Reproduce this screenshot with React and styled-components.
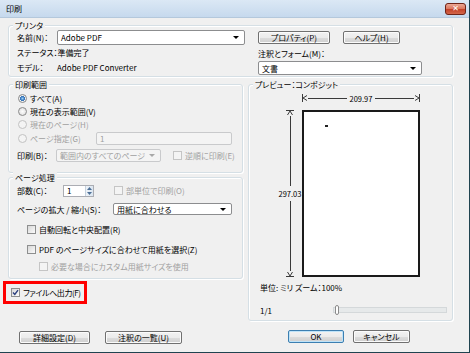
import styled, { createGlobalStyle } from "styled-components"

const GlobalStyle = createGlobalStyle`
  * { box-sizing: border-box; }
  html, body { margin: 0; padding: 0; background: #f0f0f0; }
  body {
    font-family: "Noto Sans CJK JP", "Liberation Sans", sans-serif;
    font-size: 8px;
    line-height: 11px;
    color: #000;
    font-feature-settings: "palt";
  }
`

const Window = styled.div`
  width: 470px;
  height: 353px;
  display: flex;
  flex-direction: column;
  background: #f0f0f0;
  border-right: 1px solid #1f4350;
  border-bottom: 1px solid #1f4350;
  overflow: hidden;
`

const TitleBar = styled.div`
  height: 18px;
  flex: none;
  display: flex;
  align-items: center;
  padding: 0 3px 0 6px;
  background: linear-gradient(to bottom, #dbe8f5, #c6d9ed);
  border-bottom: 1px solid #b4c8dc;
`

const TitleText = styled.span`
  flex: 1;
`

const CloseButton = styled.span`
  display: inline-flex;
  width: 21px;
  height: 12px;
  flex: none;
  align-items: center;
  justify-content: center;
  border: 1px solid #6e2418;
  border-radius: 3px;
  background: #d0553b linear-gradient(to bottom, #eba895 0%, #dc7a62 45%, #c4432a 55%, #d3664a 100%);
  color: #fff;
  font-family: "DejaVu Sans", sans-serif;
  font-size: 8px;
  font-weight: bold;
  line-height: 10px;
`

const Body = styled.div`
  flex: 1;
  padding: 7px 16px 0 8px;
  display: flex;
  flex-direction: column;
`

const Group = styled.div`
  position: relative;
  border: 1px solid #d5dfe5;
  border-radius: 3px;
  box-shadow: inset 1px 1px 0 #fff, 1px 1px 0 #fff;
`

const Legend = styled.span`
  position: absolute;
  top: -6px;
  left: 4px;
  padding: 0 2px;
  background: #f0f0f0;
  white-space: nowrap;
`

const PrinterGroup = styled(Group)`
  height: 52px;
  display: flex;
`

const PrinterInfo = styled.div`
  width: 249px;
  padding: 4px 0 0 8px;
`

const InfoRow = styled.div`
  height: 15px;
  display: flex;
  align-items: center;
  white-space: nowrap;
`

const FieldLabel = styled.span`
  width: ${(p) => p.$w || 40}px;
  flex: none;
  white-space: nowrap;
`

const PrinterActions = styled.div`
  flex: 1;
  padding-top: 5px;
  display: flex;
  flex-direction: column;
`

const ButtonRow = styled.div`
  display: flex;
  gap: ${(p) => p.$gap || 13}px;
`

const Button = styled.div`
  width: ${(p) => p.$w}px;
  height: 13px;
  flex: none;
  display: flex;
  align-items: center;
  justify-content: center;
  border: 1px solid ${(p) => (p.$default ? "#3c7fb1" : "#707070")};
  border-radius: 2px;
  background: linear-gradient(to bottom, #f2f2f2 0%, #ebebeb 50%, #dddddd 51%, #cfcfcf 100%);
  box-shadow: inset 0 0 0 1px ${(p) => (p.$default ? "#bfe3f8" : "#fbfbfb")};
  white-space: nowrap;
`

const ActionLabel = styled.div`
  margin-top: 4px;
`

const Select = styled.div`
  width: ${(p) => p.$w}px;
  height: ${(p) => p.$h || 13}px;
  flex: none;
  display: flex;
  align-items: center;
  margin-top: ${(p) => p.$mt || 0}px;
  margin-left: ${(p) => (p.$push ? "auto" : "0")};
  padding-left: 3px;
  border: 1px solid ${(p) => (p.$disabled ? "#c9cacc" : "#8c8d8f")};
  border-radius: 2px;
  background: ${(p) => (p.$disabled ? "#f4f4f4" : "#fff")};
  color: ${(p) => (p.$disabled ? "#a0a0a0" : "#000")};
  white-space: nowrap;
`

const Caret = styled.span`
  margin-left: auto;
  margin-right: 5px;
  width: 0;
  height: 0;
  border-left: 3px solid transparent;
  border-right: 3px solid transparent;
  border-top: 3px solid ${(p) => (p.$disabled ? "#a8a8a8" : "#000")};
`

const MainRow = styled.div`
  display: flex;
  gap: 5px;
  margin-top: 7px;
`

const LeftCol = styled.div`
  width: 235px;
  flex: none;
  display: flex;
  flex-direction: column;
`

const RangeGroup = styled(Group)`
  padding: 7px 10px 9px 8px;
`

const OptionRow = styled.div`
  height: ${(p) => p.$h || 13}px;
  margin-top: ${(p) => p.$mt || 0}px;
  padding-left: ${(p) => p.$indent || 0}px;
  display: flex;
  align-items: center;
  white-space: nowrap;
  color: ${(p) => (p.$disabled ? "#a0a0a0" : "#000")};
`

const Muted = styled.span`
  color: #a0a0a0;
`

const Radio = styled.span`
  width: 9px;
  height: 9px;
  flex: none;
  margin: 0 3px 0 1px;
  border-radius: 50%;
  border: 1px solid ${(p) => (p.$disabled ? "#c2c2c2" : "#8a8a8a")};
  background: ${(p) =>
    p.$checked
      ? "radial-gradient(circle, #9dd0f5 0, #2f6fb6 2.2px, #f6f6f6 2.8px, #d9d9d9 100%)"
      : p.$disabled
      ? "#f4f4f4"
      : "radial-gradient(circle, #fdfdfd, #d9d9d9)"};
`

const Check = styled.span`
  width: 9px;
  height: 9px;
  flex: none;
  margin-left: ${(p) => p.$ml || 0}px;
  margin-right: 3px;
  display: flex;
  align-items: center;
  justify-content: center;
  border: 1px solid ${(p) => (p.$disabled ? "#c5c5c5" : "#8e8f8f")};
  background: ${(p) => (p.$disabled ? "#f4f4f4" : "linear-gradient(135deg, #d8d8d8, #fbfbfb)")};
`

const TextInput = styled.div`
  width: ${(p) => p.$w}px;
  height: 13px;
  margin-left: auto;
  padding-left: 3px;
  display: flex;
  align-items: center;
  border: 1px solid #c9cacc;
  border-radius: 2px;
  background: #f4f4f4;
  color: #a0a0a0;
`

const PageGroup = styled(Group)`
  margin-top: 4px;
  padding: 6px 10px 6px 8px;
`

const Spinner = styled.div`
  width: 31px;
  height: 12px;
  flex: none;
  display: flex;
  border: 1px solid #abadb3;
  background: #fff;
`

const SpinValue = styled.span`
  flex: 1;
  padding-left: 3px;
  line-height: 10px;
`

const SpinButtons = styled.div`
  width: 8px;
  display: flex;
  flex-direction: column;
  border-left: 1px solid #c6d2de;
  background: linear-gradient(to right, #eef3f8, #dbe6f1);
`

const SpinHalf = styled.div`
  flex: 1;
  display: flex;
  align-items: center;
  justify-content: center;
`

const FileOutput = styled.div`
  width: 84px;
  height: 23px;
  margin: 2px 0 0 -5px;
  padding-left: 5px;
  display: flex;
  align-items: center;
  border: 3px solid #ff0000;
  white-space: nowrap;
  letter-spacing: -0.4px;
`

const RightCol = styled.div`
  flex: 1;
  display: flex;
  flex-direction: column;
`

const PreviewGroup = styled(Group)`
  height: 237px;
  padding-top: 7px;
`

const Diagram = styled.div`
  display: grid;
  grid-template-columns: 24px 118px;
  grid-template-rows: 12px 167px;
  row-gap: 6px;
  margin-left: 29px;
`

const WidthRuler = styled.div`
  display: flex;
  align-items: center;
`

const HeightRuler = styled.div`
  display: flex;
  flex-direction: column;
  align-items: center;
`

const HLine = styled.span`
  flex: 1;
  height: 1px;
  background: #3a3a3a;
`

const VLine = styled.span`
  flex: 1;
  width: 1px;
  background: #3a3a3a;
`

const DimText = styled.span`
  padding: 0 3px;
  white-space: nowrap;
  font-size: 7.5px;
`

const VDimText = styled.span`
  padding: 2px 0;
  white-space: nowrap;
  font-size: 7.5px;
  background: #f0f0f0;
`

const Page = styled.div`
  border: 2px solid #1a1a1a;
  background: #fff;
`

const PageMark = styled.div`
  width: 3px;
  height: 2px;
  margin: 13px 0 0 21px;
  background: #222;
`

const PreviewText = styled.div`
  margin-top: 5px;
  padding-left: 11px;
  white-space: nowrap;
`

const PagerRow = styled.div`
  height: 14px;
  margin-top: 10px;
  padding: 0 5px 0 11px;
  display: flex;
  align-items: center;
`

const SliderTrack = styled.div`
  margin-left: auto;
  width: 114px;
  height: 6px;
  display: flex;
  align-items: center;
  border: 1px solid #d4d8da;
  background: #e6e9ea;
`

const SliderThumb = styled.div`
  width: 4px;
  height: 10px;
  margin-left: 1px;
  border: 1px solid #8b8b8b;
  border-radius: 2px;
  background: #fff;
`

const Footer = styled.div`
  display: flex;
  margin-top: 9px;
  padding-left: 11px;
`

const FooterLeft = styled(ButtonRow)`
  margin-top: 1px;
`

const FooterRight = styled(ButtonRow)`
  margin-left: auto;
  margin-right: 43px;
`

const CheckMark = () => (
  <svg width="7" height="7" viewBox="0 0 7 7">
    <path d="M1 3.6 L2.8 5.4 L6 1.2" fill="none" stroke="#2b3f7e" strokeWidth="1.4" />
  </svg>
)

const Tri = ({ up }) => (
  <svg width="5" height="3" viewBox="0 0 5 3">
    <path d={up ? "M0 3 L2.5 0 L5 3 Z" : "M0 0 L2.5 3 L5 0 Z"} fill="#4d6f96" />
  </svg>
)

const App = () => {
  return (
    <>
      <GlobalStyle />
      <Window>
        <TitleBar>
          <TitleText>印刷</TitleText>
          <CloseButton>✕</CloseButton>
        </TitleBar>
        <Body>
          <PrinterGroup>
            <Legend>プリンタ</Legend>
            <PrinterInfo>
              <InfoRow>
                <FieldLabel>名前(N)：</FieldLabel>
                <Select $w={188} $h={15}>
                  Adobe PDF
                  <Caret />
                </Select>
              </InfoRow>
              <InfoRow>ステータス：準備完了</InfoRow>
              <InfoRow>
                <FieldLabel>モデル：</FieldLabel>
                Adobe PDF Converter
              </InfoRow>
            </PrinterInfo>
            <PrinterActions>
              <ButtonRow>
                <Button $w={72}>プロパティ(P)</Button>
                <Button $w={57}>ヘルプ(H)</Button>
              </ButtonRow>
              <ActionLabel>注釈とフォーム(M)：</ActionLabel>
              <Select $w={164} $h={14} $mt={2}>
                文書
                <Caret />
              </Select>
            </PrinterActions>
          </PrinterGroup>

          <MainRow>
            <LeftCol>
              <RangeGroup>
                <Legend>印刷範囲</Legend>
                <OptionRow>
                  <Radio $checked />
                  すべて(A)
                </OptionRow>
                <OptionRow>
                  <Radio />
                  現在の表示範囲(V)
                </OptionRow>
                <OptionRow $disabled>
                  <Radio $disabled />
                  現在のページ(H)
                </OptionRow>
                <OptionRow $disabled $h={15}>
                  <Radio $disabled />
                  ページ指定(G)
                  <TextInput $w={136}>1</TextInput>
                </OptionRow>
                <OptionRow $h={15} $mt={2}>
                  <FieldLabel $w={39}>印刷(B)：</FieldLabel>
                  <Select $w={105} $disabled>
                    範囲内のすべてのページ
                    <Caret $disabled />
                  </Select>
                  <Check $disabled $ml={12} />
                  <Muted>逆順に印刷(E)</Muted>
                </OptionRow>
              </RangeGroup>

              <PageGroup>
                <Legend>ページ処理</Legend>
                <OptionRow>
                  <FieldLabel $w={46}>部数(C)：</FieldLabel>
                  <Spinner>
                    <SpinValue>1</SpinValue>
                    <SpinButtons>
                      <SpinHalf>
                        <Tri up />
                      </SpinHalf>
                      <SpinHalf>
                        <Tri />
                      </SpinHalf>
                    </SpinButtons>
                  </Spinner>
                  <Check $disabled $ml={20} />
                  <Muted>部単位で印刷(O)</Muted>
                </OptionRow>
                <OptionRow $h={14} $mt={5}>
                  ページの拡大 / 縮小(S)：
                  <Select $w={119} $h={12} $push>
                    用紙に合わせる
                    <Caret />
                  </Select>
                </OptionRow>
                <OptionRow $h={12} $mt={7} $indent={10}>
                  <Check />
                  自動回転と中央配置(R)
                </OptionRow>
                <OptionRow $h={12} $mt={8} $indent={10}>
                  <Check />
                  PDF のページサイズに合わせて用紙を選択(Z)
                </OptionRow>
                <OptionRow $h={12} $mt={5} $indent={22} $disabled>
                  <Check $disabled />
                  必要な場合にカスタム用紙サイズを使用
                </OptionRow>
              </PageGroup>

              <FileOutput>
                <Check>
                  <CheckMark />
                </Check>
                ファイルへ出力(F)
              </FileOutput>
            </LeftCol>

            <RightCol>
              <PreviewGroup>
                <Legend>プレビュー：コンポジット</Legend>
                <Diagram>
                  <div />
                  <WidthRuler>
                    <svg width="6" height="8" viewBox="0 0 6 8">
                      <path d="M0.5 0 V8 M5 1.5 L1 4 L5 6.5" fill="none" stroke="#3a3a3a" strokeWidth="1" />
                    </svg>
                    <HLine />
                    <DimText>209.97</DimText>
                    <HLine />
                    <svg width="6" height="8" viewBox="0 0 6 8">
                      <path d="M5.5 0 V8 M1 1.5 L5 4 L1 6.5" fill="none" stroke="#3a3a3a" strokeWidth="1" />
                    </svg>
                  </WidthRuler>
                  <HeightRuler>
                    <svg width="8" height="6" viewBox="0 0 8 6">
                      <path d="M0 0.5 H8 M1.5 5 L4 1 L6.5 5" fill="none" stroke="#3a3a3a" strokeWidth="1" />
                    </svg>
                    <VLine />
                    <VDimText>297.03</VDimText>
                    <VLine />
                    <svg width="8" height="6" viewBox="0 0 8 6">
                      <path d="M0 5.5 H8 M1.5 1 L4 5 L6.5 1" fill="none" stroke="#3a3a3a" strokeWidth="1" />
                    </svg>
                  </HeightRuler>
                  <Page>
                    <PageMark />
                  </Page>
                </Diagram>
                <PreviewText>単位: ミリ ズーム：100%</PreviewText>
                <PagerRow>
                  1/1
                  <SliderTrack>
                    <SliderThumb />
                  </SliderTrack>
                </PagerRow>
              </PreviewGroup>
            </RightCol>
          </MainRow>

          <Footer>
            <FooterLeft $gap={15}>
              <Button $w={71}>詳細設定(D)</Button>
              <Button $w={77}>注釈の一覧(U)</Button>
            </FooterLeft>
            <FooterRight $gap={9}>
              <Button $w={56} $default>
                OK
              </Button>
              <Button $w={57}>キャンセル</Button>
            </FooterRight>
          </Footer>
        </Body>
      </Window>
    </>
  )
}

export default App
